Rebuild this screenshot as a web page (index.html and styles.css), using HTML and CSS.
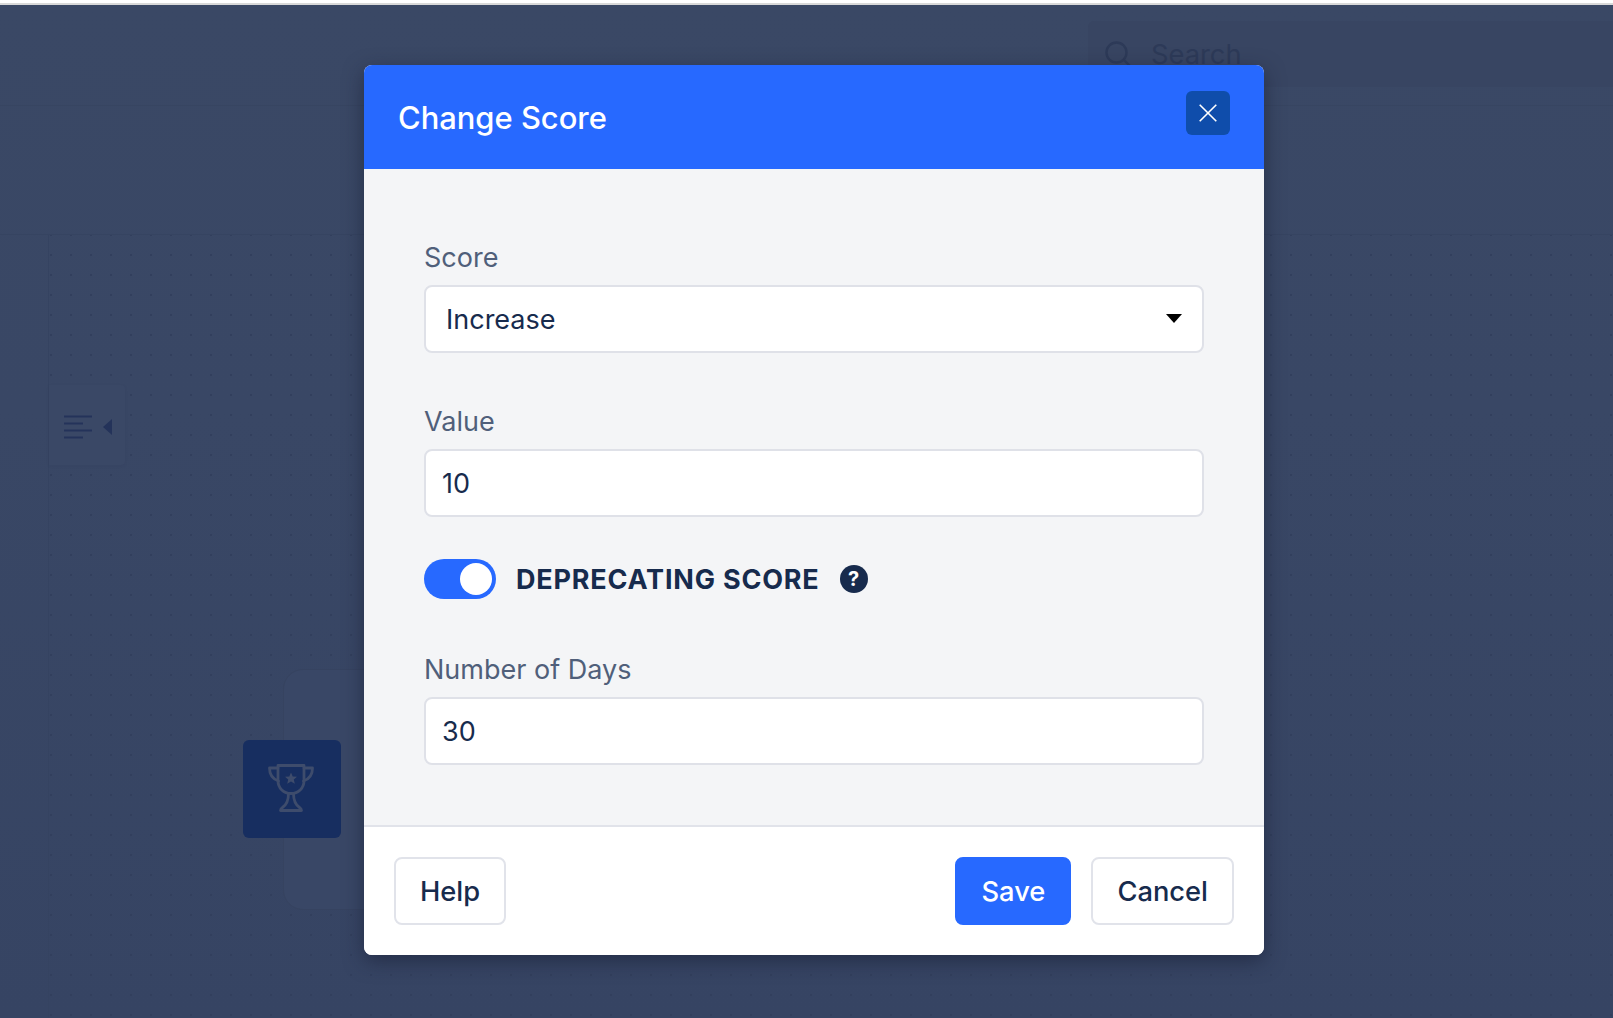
FILE: index.html
```html
<!DOCTYPE html>
<html lang="en">
<head>
<meta charset="utf-8">
<title>Change Score</title>
<link rel="stylesheet" href="styles.css">
</head>
<body>
<div class="app">
  <div class="topline"></div>
  <header class="topbar">
    <div class="search">
      <svg class="search-icon" viewBox="0 0 26 26" width="26" height="26" aria-hidden="true"><circle cx="11.500" cy="11.500" r="10"/><path d="M18.800 18.800l6.200 6.200"/></svg>
      <span class="search-text">Search</span>
    </div>
  </header>
  <div class="subbar"></div>
  <main class="workspace">
    <aside class="rail"></aside>
    <section class="canvas">
      <div class="panel">
        <svg class="panel-icon" viewBox="0 0 49 24" width="49" height="24" aria-hidden="true"><path class="panel-lines" d="M0 1.500h28M0 8.500h19M0 15.500h28M0 22.500h19"/><path class="panel-arrow" d="M48 4v16l-9-8z"/></svg>
      </div>
      <div class="node-frame"></div>
      <div class="node">
        <svg viewBox="0 0 46 48" width="46" height="48" aria-hidden="true"><path class="tr" d="M10 1.500h26v15c0 8-5.800 13-13 13s-13-5-13-13z"/><path class="tr" d="M10 4H1.500c0 7 3 11 9 13M36 4h8.500c0 7-3 11-9 13"/><path class="tr" d="M20.500 29.500c0 7-1.500 11-6 14-1.500 1-2 2-2 3h21c0-1-.5-2-2-3-4.500-3-6-7-6-14"/><path class="tr-star" d="M23 8.500l1.700 3.900 4.300.4-3.200 2.800 1 4.200-3.800-2.200-3.800 2.200 1-4.200-3.200-2.800 4.300-.4z"/></svg>
      </div>
    </section>
  </main>
</div>

<div class="modal" role="dialog" aria-label="Change Score">
  <div class="modal-head">
    <h2 class="modal-title">Change Score</h2>
    <button class="close" type="button" aria-label="Close">
      <svg viewBox="0 0 18 18" width="18" height="18" aria-hidden="true"><path d="M.7.7l16.600 16.600M17.300.7L.7 17.300"/></svg>
    </button>
  </div>
  <div class="modal-body">
    <div class="field field-first">
      <label class="label">Score</label>
      <div class="select"><span>Increase</span><i class="caret"></i></div>
    </div>
    <div class="field">
      <label class="label">Value</label>
      <input class="input" type="text" value="10">
    </div>
    <div class="toggle-row">
      <span class="toggle"><span class="knob"></span></span>
      <span class="toggle-label">DEPRECATING SCORE</span>
      <span class="hint">?</span>
    </div>
    <div class="field">
      <label class="label">Number of Days</label>
      <input class="input" type="text" value="30">
    </div>
  </div>
  <div class="modal-foot">
    <button class="btn" type="button">Help</button>
    <div class="foot-right">
      <button class="btn btn-primary" type="button">Save</button>
      <button class="btn" type="button">Cancel</button>
    </div>
  </div>
</div>
</body>
</html>
```
FILE: styles.css
```css
* { box-sizing: border-box; }
html, body { margin: 0; height: 100%; }
body {
  width: 1613px;
  height: 1018px;
  overflow: hidden;
  position: relative;
  font-family: Inter, "Liberation Sans", sans-serif;
  background: linear-gradient(180deg, #3a4865 0%, #394765 40%, #364463 100%);
}
.app { display: flex; flex-direction: column; height: 1018px; }
.topline { height: 5px; flex: none; background: #fff; border-bottom: 2px solid #d9d9d9; }
.topbar {
  height: 101px;
  flex: none;
  display: flex;
  justify-content: flex-end;
  border-bottom: 1px solid #374561;
  padding-top: 16px;
}
.search {
  width: 525px;
  height: 66px;
  background: #384562;
  border-radius: 6px 0 0 6px;
  display: flex;
  align-items: center;
  gap: 20px;
  padding-left: 17px;
}
.search-icon { fill: none; stroke: #2d3a58; stroke-width: 2.400; }
.search-text { font-size: 27.300px; color: #2d3a58; }
.subbar { height: 129px; flex: none; border-bottom: 1px solid #364461; }
.workspace { flex: 1; display: flex; min-height: 0; }
.rail { width: 49px; flex: none; border-right: 1px solid #354361; }
.canvas {
  flex: 1;
  position: relative;
  background-image: radial-gradient(circle at 2px 1px, #323f5d 1px, transparent 1.200px);
  background-size: 20px 20px;
  background-position: 0 -1px;
}
.panel {
  position: absolute;
  left: 0;
  top: 150px;
  width: 76px;
  height: 80px;
  background: #3a4866;
  border-radius: 0 4px 4px 0;
  box-shadow: 0 1px 3px rgba(40, 50, 75, .1);
  padding: 30px 0 0 15px;
}
.panel-icon { display: block; }
.panel-lines { fill: none; stroke: #24335a; stroke-width: 2; }
.panel-arrow { fill: #24335a; }
.node-frame {
  position: absolute;
  left: 234px;
  top: 434px;
  width: 900px;
  height: 241px;
  background: #394766;
  border: 1px solid #364360;
  border-radius: 20px 0 0 20px;
}
.node {
  position: absolute;
  left: 194px;
  top: 505px;
  width: 98px;
  height: 98px;
  background: #172e60;
  border-radius: 6px;
  display: flex;
  align-items: center;
  justify-content: center;
  padding: 0 3px 2px 0;
}
.tr { fill: none; stroke: #3e4c6c; stroke-width: 2.800; stroke-linejoin: round; stroke-linecap: round; }
.tr-star { fill: #3e4c6c; }

.modal {
  position: absolute;
  left: 364px;
  top: 65px;
  width: 900px;
  height: 890px;
  display: flex;
  flex-direction: column;
  border-radius: 8px;
  overflow: hidden;
  background: #fff;
  box-shadow: 0 6px 20px rgba(22, 28, 50, .55);
}
.modal-head {
  height: 104px;
  flex: none;
  background: #2769ff;
  display: flex;
  justify-content: space-between;
  align-items: flex-start;
  padding: 26px 34px 0;
}
.modal-title { margin: 7px 0 0; font-size: 30.900px; line-height: 40px; font-weight: 500; color: #fff; }
.close {
  width: 44px;
  height: 44px;
  padding: 0;
  border: 0;
  border-radius: 6px;
  background: #0f4dab;
  display: flex;
  align-items: center;
  justify-content: center;
}
.close svg { fill: none; stroke: #fff; stroke-width: 1.600; }
.modal-body {
  flex: 1;
  background: #f4f5f7;
  padding: 71px 60px 0;
  border-bottom: 2px solid #e1e3ea;
}
.field { margin-bottom: 42px; }
.field-first { margin-bottom: 51px; }
.label { display: block; font-size: 27px; line-height: 36px; color: #505f7a; margin-bottom: 9px; }
.select, .input {
  display: block;
  width: 100%;
  height: 68px;
  background: #fff;
  border: 2px solid #dfe1e8;
  border-radius: 8px;
  font: 400 27px Inter, "Liberation Sans", sans-serif;
  color: #172b4d;
}
.input { padding: 0 16px; outline: none; }
.select { display: flex; align-items: center; justify-content: space-between; padding: 0 20px 0 20px; position: relative; }
.caret { width: 0; height: 0; border-left: 8px solid transparent; border-right: 8px solid transparent; border-top: 9px solid #000; margin-top: -2px; }
.toggle-row { display: flex; align-items: center; height: 40px; margin: 0 0 53px; }
.toggle { width: 72px; height: 40px; flex: none; border-radius: 20px; background: #2769ff; display: flex; justify-content: flex-end; align-items: center; padding-right: 4px; }
.knob { width: 32px; height: 32px; border-radius: 50%; background: #fff; }
.toggle-label { margin-left: 20px; padding-top: 2px; font-size: 27px; line-height: 40px; font-weight: 700; letter-spacing: .8px; color: #172b4d; }
.hint {
  margin-left: 20px;
  width: 28px;
  height: 28px;
  border-radius: 50%;
  background: #172b4d;
  color: #fff;
  font-size: 20px;
  font-weight: 700;
  line-height: 28px;
  text-align: center;
}
.modal-foot {
  height: 128px;
  flex: none;
  background: #fff;
  display: flex;
  justify-content: space-between;
  align-items: flex-start;
  padding: 30px 30px 0;
}
.foot-right { display: flex; gap: 20px; }
.btn {
  height: 68px;
  padding: 0 24px;
  border: 2px solid #e1e3ea;
  border-radius: 8px;
  background: #fff;
  color: #172b4d;
  font: 500 27.300px Inter, "Liberation Sans", sans-serif;
}
.btn-primary { background: #2769ff; border-color: #2769ff; color: #fff; }
```
